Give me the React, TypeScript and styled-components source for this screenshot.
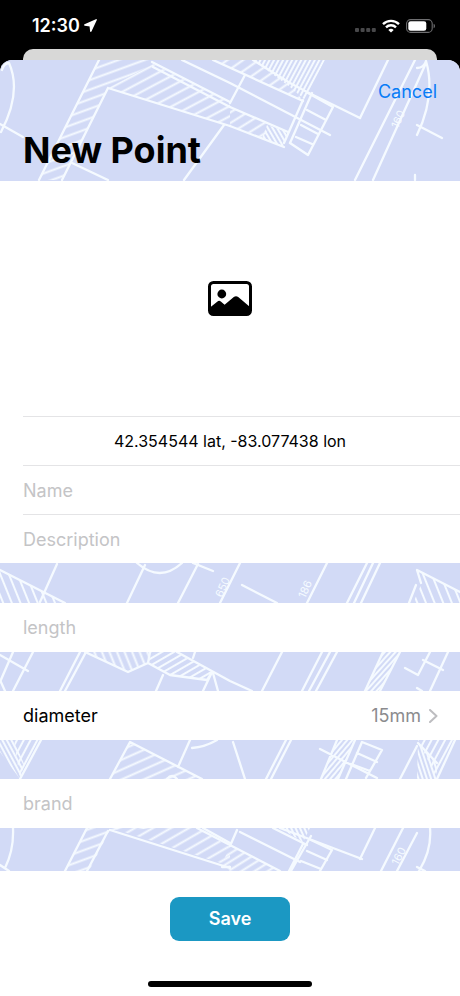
import React, { useId } from "react";
import styled, { createGlobalStyle } from "styled-components";

const GlobalStyle = createGlobalStyle`
  *, *::before, *::after { box-sizing: border-box; }
  body {
    margin: 0;
    background: #000;
    font-family: Inter, "Liberation Sans", sans-serif;
    font-size: 18px;
    line-height: 24px;
    color: #000;
  }
`;

const Screen = styled.div`
  min-height: 100vh;
  display: flex;
  flex-direction: column;
  background: #000;
`;

const StatusBar = styled.header`
  display: flex;
  align-items: center;
  justify-content: space-between;
  height: 49px;
  padding: 2px 24px 0 32px;
  color: #fff;
`;

const StatusGroup = styled.div<{ $gap: number }>`
  display: flex;
  align-items: center;
  gap: ${(p) => p.$gap}px;
`;

const Clock = styled.time`
  font-size: 18px;
  font-weight: 600;
`;

const SheetBehind = styled.div`
  height: 11px;
  margin: 0 23px;
  border-radius: 10px 10px 0 0;
  background: #d8d8d7;
`;

const Sheet = styled.main`
  flex: 1;
  display: flex;
  flex-direction: column;
  overflow: hidden;
  border-radius: 12px 12px 0 0;
  background: #fff;
`;

const Blueprint = styled.div<{ $height: number }>`
  position: relative;
  height: ${(p) => p.$height}px;
  overflow: hidden;
  background: #d2daf6;
`;

const BlueprintDrawing = styled.svg`
  position: absolute;
  inset: 0;
  width: 100%;
  height: 100%;
  fill: none;
  stroke: #f5faff;
  stroke-width: 2.3;
  stroke-linecap: round;
  stroke-linejoin: round;

  text {
    fill: #f5faff;
    stroke: none;
    font-size: 11px;
    line-height: 12px;
  }
`;

const SheetHeader = styled.div`
  position: relative;
  height: 100%;
  display: flex;
  flex-direction: column;
  justify-content: space-between;
  padding: 20px 23px 9px;
`;

const CancelButton = styled.button`
  align-self: flex-end;
  padding: 0;
  border: 0;
  background: none;
  font: inherit;
  color: #087cf6;
  cursor: pointer;
`;

const Title = styled.h1`
  margin: 0;
  font-size: 36px;
  line-height: 44px;
  font-weight: 700;
`;

const Form = styled.form`
  flex: 1;
  display: flex;
  flex-direction: column;
`;

const Group = styled.section`
  padding-left: 23px;
  background: #fff;
`;

const PhotoButton = styled.button`
  display: flex;
  align-items: center;
  justify-content: center;
  width: 100%;
  height: 235px;
  padding: 0 23px 0 0;
  border: 0;
  background: none;
  color: #000;
  cursor: pointer;
`;

const Row = styled.div<{ $divided?: boolean }>`
  display: flex;
  align-items: center;
  height: 49px;
  padding-right: 23px;
  border-top: ${(p) => (p.$divided ? "1px solid #e4e4e6" : "0")};
`;

const Coordinates = styled.p`
  flex: 1;
  margin: 0;
  text-align: center;
  font-size: 16px;
`;

const Field = styled.input`
  flex: 1;
  min-width: 0;
  height: 100%;
  padding: 0;
  border: 0;
  outline: 0;
  background: none;
  font: inherit;
  color: inherit;

  &::placeholder {
    color: #c4c4c6;
    opacity: 1;
  }
`;

const PickerRow = styled.button`
  display: flex;
  align-items: center;
  width: 100%;
  height: 49px;
  padding: 0 22px 0 0;
  border: 0;
  background: none;
  font: inherit;
  color: inherit;
  cursor: pointer;
`;

const PickerValue = styled.span`
  margin-left: auto;
  margin-right: 8px;
  color: #8b8b8e;
`;

const Footer = styled.footer`
  flex: 1;
  display: flex;
  flex-direction: column;
  align-items: center;
  justify-content: space-between;
  padding: 26px 0 9px;
`;

const SaveButton = styled.button`
  width: 120px;
  height: 44px;
  border: 0;
  border-radius: 9px;
  background: #1b98c3;
  font: inherit;
  font-weight: 600;
  color: #fff;
  cursor: pointer;
`;

const HomeIndicator = styled.div`
  width: 164px;
  height: 6px;
  border-radius: 3px;
  background: #000;
`;

interface HatchProps {
  points: string;
  angle: number;
  gap: number;
  weight?: number;
}

function Hatch({ points, angle, gap, weight = 2 }: HatchProps) {
  const id = useId();
  return (
    <>
      <pattern
        id={id}
        width={gap}
        height={gap}
        patternUnits="userSpaceOnUse"
        patternTransform={`rotate(${angle})`}
      >
        <path d={`M-1 ${gap / 2}H${gap + 1}`} strokeWidth={weight} />
      </pattern>
      <polygon points={points} fill={`url(#${id})`} stroke="none" />
    </>
  );
}

interface BandProps {
  height: number;
  drawing: React.ReactNode;
  children?: React.ReactNode;
}

function Band({ height, drawing, children }: BandProps) {
  return (
    <Blueprint $height={height}>
      <BlueprintDrawing
        viewBox={`0 0 460 ${height}`}
        preserveAspectRatio="xMinYMin slice"
        aria-hidden="true"
      >
        {drawing}
      </BlueprintDrawing>
      {children}
    </Blueprint>
  );
}

const headerDrawing = (
  <>
    <Hatch points="99,0 155,0 153,4 108,28 62,120 39,120" angle={-20} gap={9} />
    <Hatch points="153,4 230,43 230,66 108,28" angle={-28} gap={9} />
    <Hatch points="213,0 253,0 290,23 303,41" angle={-35} gap={9} />
    <Hatch points="253,0 325,0 305,40 290,27" angle={-62} gap={4} />
    <Hatch points="230,47 270,65 264,78 230,66" angle={-32} gap={9} />
    <Hatch points="267,65 288,72 283,87 262,78" angle={60} gap={4} />
    <path d="M2 10Q4 3 9 3Q22 32 1 72M0 64L23 77M72 103L108 120" />
    <path d="M99 0L39 120M108 28L62 120M108 28L230 66M224 65L184 120" />
    <path d="M154 3L303 80M152 6L230 47" strokeWidth="0" />
    <path d="M152 2L230 42M153 7L230 47M182 0L230 23L330 75M213 0L303 41M253 0L290 23L307 32L360 58" />
    <path d="M245 15L230 43M230 47L288 72M230 66L284 87M303 40L284 83M312 33L290 83" />
    <path d="M308 33L333 47L308 95L290 83M307 50L326 60M301 65L318 74M296 77L312 84" />
    <path d="M388 0L360 58M415 0L355 120M426 3L373 120M417 8Q424 8 426 1Q436 35 417 75M417 65L442 78M415 115V120" />
    <text transform="translate(398 69) rotate(-66)">160</text>
  </>
);

const detailsDrawing = (
  <>
    <Hatch points="0,7 65,40 0,40" angle={68} gap={8} />
    <Hatch points="417,7 460,29 460,40 413,40 421,22" angle={68} gap={8} />
    <path d="M0 7L65 40M57 1L40 39M137 0Q160 20 182 0M145 2L127 40M198 1L178 40M193 0L213 8" />
    <path d="M240 0L220 40M242 22L277 40M327 0L307 40M367 0L347 40M373 0L354 40M380 0L361 40" />
    <path d="M460 29L417 7L421 20M416 22L409 40" />
    <text transform="translate(222 35) rotate(-66)">650</text>
    <text transform="translate(305 36) rotate(-66)">186</text>
  </>
);

const lengthDrawing = (
  <>
    <Hatch points="85,0 150,0 148,11 128,20" angle={68} gap={7} />
    <Hatch points="150,0 175,0 212,20 207,28 170,23 148,11" angle={-30} gap={6} />
    <Hatch points="383,0 400,0 380,39 365,39" angle={-48} gap={4} />
    <path d="M13 0L0 30M33 0L13 39M0 3L28 19M0 28L5 39M80 0L60 39M86 0L65 39" />
    <path d="M85 0L128 20L148 11L170 23L207 28L212 20M150 0L148 11M177 0L230 29L252 39" />
    <path d="M163 23L156 39M212 20L203 39M213 21L218 39M195 0L193 6M282 0L262 39" />
    <path d="M322 0L302 39M330 0L309 39M337 0L316 39M383 0L365 39M400 0L380 39" />
    <path d="M430 0L418 23L405 16M448 0L430 39M423 8L443 18M417 36L422 39" />
  </>
);

const diameterDrawing = (
  <>
    <Hatch points="0,0 14,0 24,24 20,39 0,12" angle={62} gap={4} />
    <Hatch points="14,0 41,0 20,39" angle={-62} gap={6} />
    <Hatch points="130,2 202,39 110,39" angle={-24} gap={9} />
    <Hatch points="337,0 355,0 338,39 321,39" angle={-50} gap={4} />
    <Hatch points="418,3 437,23 437,39 417,39" angle={72} gap={4} />
    <Hatch points="418,0 455,0 437,39" angle={-62} gap={6} />
    <path d="M41 0L20 39M110 39L130 2L202 39M190 0L178 27M192 8Q205 7 217 0M167 39Q172 33 177 39" />
    <path d="M233 2L245 39M286 0L266 39M291 0L271 39M337 0L321 39M355 0L338 39M320 9L377 38" />
    <path d="M346 39L362 2L382 10L366 38M357 13L377 22M351 24L370 31M417 6L400 39M418 3L437 23M455 0L437 39" />
  </>
);

const brandDrawing = (
  <>
    <Hatch points="86,0 180,0 110,2 89,43 65,43" angle={-20} gap={9} />
    <Hatch points="112,0 197,0 230,19 230,38" angle={-30} gap={9} />
    <Hatch points="230,18 280,43 230,43 222,36" angle={-32} gap={7} />
    <Hatch points="280,0 310,0 303,14" angle={66} gap={4} />
    <path d="M13 0Q14 22 5 40M0 37L9 43M87 0L65 43M108 3L87 43M110 2L230 40M197 0L280 43" />
    <path d="M203 0L230 15M237 2L230 18M222 39H230M240 4L300 34M273 0L307 17M280 0L362 31" />
    <path d="M375 0L360 31M311 8L291 43M303 16L289 43M311 12L332 22L320 43M307 23L327 32M301 33L321 41" />
    <path d="M403 0L381 43M417 5L397 43M430 0Q432 22 419 43M417 39L425 43" />
    <text transform="translate(398 38) rotate(-62)">160</text>
  </>
);

function LocationArrow() {
  return (
    <svg width="13" height="13" viewBox="0 0 13 13" aria-hidden="true">
      <path d="M12.200.8L.8 6l5.400.8.600 5.400z" fill="#fff" stroke="#fff" strokeWidth="1.4" strokeLinejoin="round" />
    </svg>
  );
}

function CellularDots() {
  return (
    <svg width="22" height="18" viewBox="0 0 22 18" fill="#48484a" aria-hidden="true">
      <rect x="1" y="11" width="4" height="4" rx="1" />
      <rect x="6.6" y="11" width="4" height="4" rx="1" />
      <rect x="12.2" y="11" width="4" height="4" rx="1" />
      <rect x="17.8" y="11" width="4" height="4" rx="1" />
    </svg>
  );
}

function WifiIcon() {
  return (
    <svg width="18" height="14" viewBox="0 0 18 14" fill="none" stroke="#fff" strokeWidth="2.4" aria-hidden="true">
      <path d="M1 5.1a11.5 11.5 0 0 1 16 0M4 8.3a7.2 7.2 0 0 1 10 0" />
      <path d="M9 13.6L6.3 10.9a4 4 0 0 1 5.4 0z" fill="#fff" stroke="none" />
    </svg>
  );
}

function BatteryIcon() {
  return (
    <svg width="30" height="14" viewBox="0 0 30 14" aria-hidden="true">
      <rect x=".6" y=".6" width="25.6" height="12.8" rx="4" fill="none" stroke="#6e6e70" strokeWidth="1.1" />
      <rect x="2.3" y="2.2" width="18" height="9.6" rx="2.3" fill="#fff" />
      <path d="M27.6 4.7v4.6q1.4-.6 1.4-2.3t-1.4-2.3z" fill="#6e6e70" />
    </svg>
  );
}

function PhotoIcon() {
  return (
    <svg width="44" height="35" viewBox="0 0 44 35" aria-hidden="true">
      <rect x="1.500" y="1.500" width="41" height="32" rx="4" fill="none" stroke="#000" strokeWidth="3" />
      <circle cx="13.800" cy="13" r="4.400" />
      <path d="M2 26.500l7.500-6q1.700-1.300 3.300 0l3.800 3.300 9.200-7.700q2.200-1.800 4.400 0L42 26v4q0 3.500-4 3.500H6q-4 0-4-3.500z" />
    </svg>
  );
}

function Chevron() {
  return (
    <svg width="9" height="14" viewBox="0 0 9 14" fill="none" stroke="#bdbdc0" strokeWidth="2" aria-hidden="true">
      <path d="M1 1l6.500 6L1 13" strokeLinecap="round" strokeLinejoin="round" />
    </svg>
  );
}

export default function App() {
  return (
    <>
      <GlobalStyle />
      <Screen>
        <StatusBar>
          <StatusGroup $gap={4}>
            <Clock>12:30</Clock>
            <LocationArrow />
          </StatusGroup>
          <StatusGroup $gap={6}>
            <CellularDots />
            <WifiIcon />
            <BatteryIcon />
          </StatusGroup>
        </StatusBar>
        <SheetBehind />
        <Sheet>
          <Band height={121} drawing={headerDrawing}>
            <SheetHeader>
              <CancelButton type="button">Cancel</CancelButton>
              <Title>New Point</Title>
            </SheetHeader>
          </Band>
          <Form onSubmit={(event) => event.preventDefault()}>
            <Group>
              <PhotoButton type="button" aria-label="Add photo">
                <PhotoIcon />
              </PhotoButton>
              <Row $divided>
                <Coordinates>42.354544 lat, -83.077438 lon</Coordinates>
              </Row>
              <Row $divided>
                <Field aria-label="Name" placeholder="Name" />
              </Row>
              <Row $divided>
                <Field aria-label="Description" placeholder="Description" />
              </Row>
            </Group>
            <Band height={40} drawing={detailsDrawing} />
            <Group>
              <Row>
                <Field aria-label="length" placeholder="length" />
              </Row>
            </Group>
            <Band height={39} drawing={lengthDrawing} />
            <Group>
              <PickerRow type="button">
                <span>diameter</span>
                <PickerValue>15mm</PickerValue>
                <Chevron />
              </PickerRow>
            </Group>
            <Band height={39} drawing={diameterDrawing} />
            <Group>
              <Row>
                <Field aria-label="brand" placeholder="brand" />
              </Row>
            </Group>
            <Band height={43} drawing={brandDrawing} />
            <Footer>
              <SaveButton type="submit">Save</SaveButton>
              <HomeIndicator />
            </Footer>
          </Form>
        </Sheet>
      </Screen>
    </>
  );
}
